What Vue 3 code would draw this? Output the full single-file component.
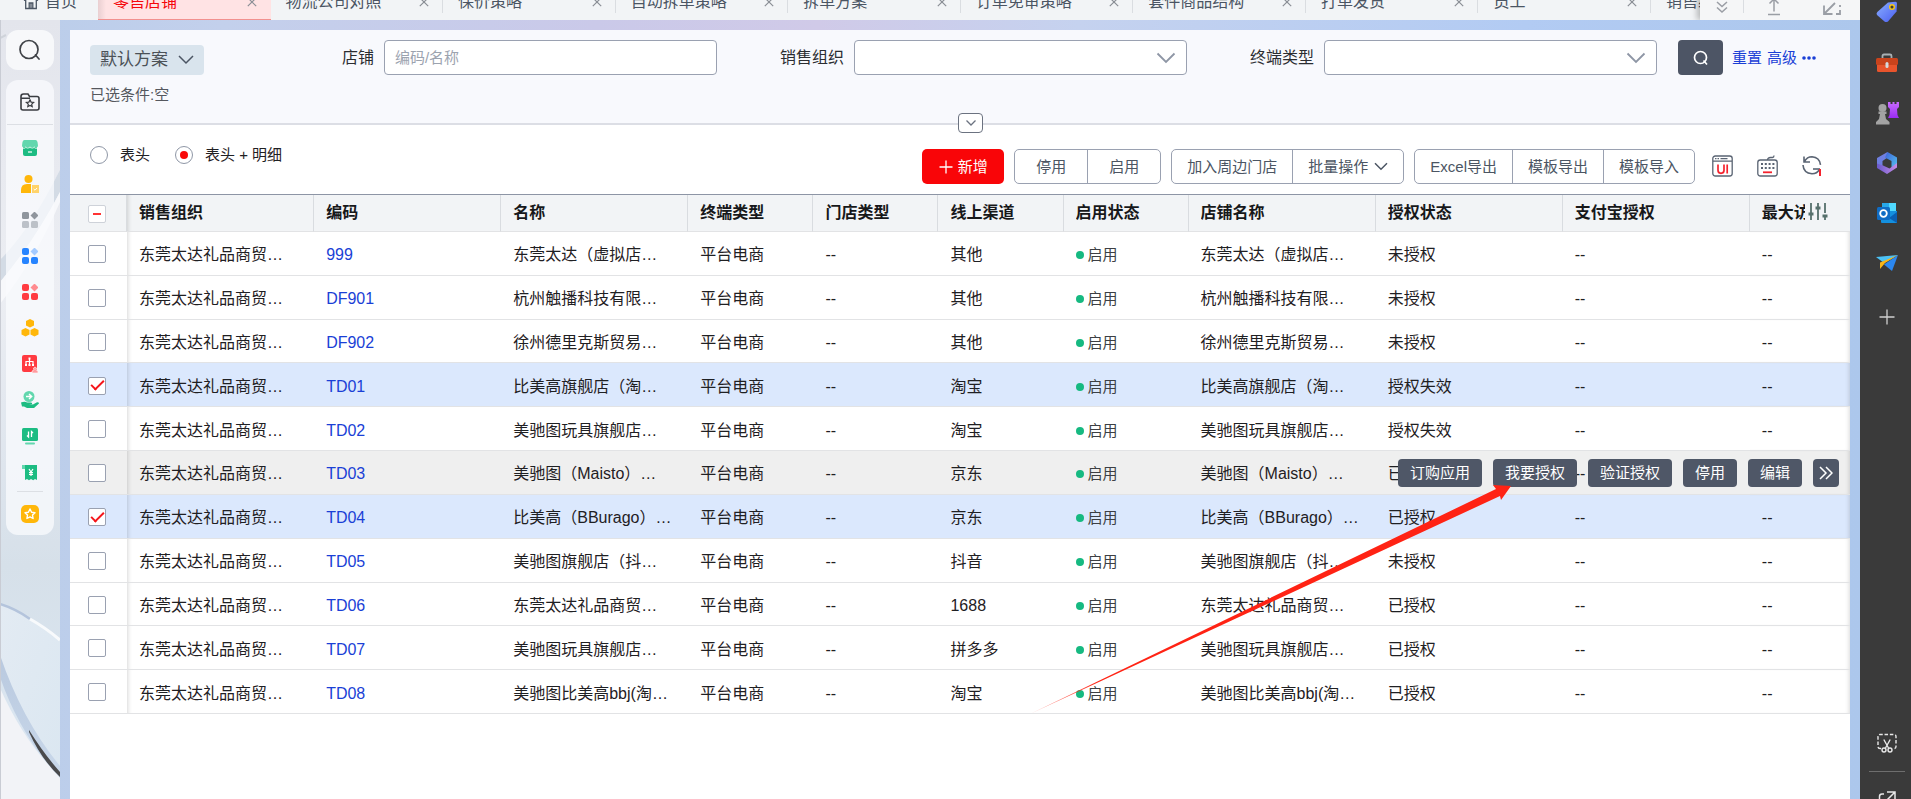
<script setup>
import { ref } from 'vue'

const tabs = ['零售店铺', '物流公司对照', '保价策略', '自动拆单策略', '拆单方案', '订单免审策略', '套件商品结构', '打单发货', '员工']

const columns = [
  { key: 'org', label: '销售组织' },
  { key: 'code', label: '编码' },
  { key: 'name', label: '名称' },
  { key: 'terminal', label: '终端类型' },
  { key: 'storeType', label: '门店类型' },
  { key: 'channel', label: '线上渠道' },
  { key: 'status', label: '启用状态' },
  { key: 'shop', label: '店铺名称' },
  { key: 'auth', label: '授权状态' },
  { key: 'alipay', label: '支付宝授权' },
  { key: 'max', label: '最大访' }
]

const row = (code, name, channel, auth, checked = false) => ({
  org: '东莞太达礼品商贸…',
  code,
  name,
  terminal: '平台电商',
  storeType: '--',
  channel,
  status: '启用',
  shop: name,
  auth,
  alipay: '--',
  max: '--',
  checked
})

const rows = ref([
  row('999', '东莞太达（虚拟店…', '其他', '未授权'),
  row('DF901', '杭州触播科技有限…', '其他', '未授权'),
  row('DF902', '徐州德里克斯贸易…', '其他', '未授权'),
  row('TD01', '比美高旗舰店（淘…', '淘宝', '授权失效', true),
  row('TD02', '美驰图玩具旗舰店…', '淘宝', '授权失效'),
  row('TD03', '美驰图（Maisto）…', '京东', '已授权'),
  row('TD04', '比美高（BBurago）…', '京东', '已授权', true),
  row('TD05', '美驰图旗舰店（抖…', '抖音', '未授权'),
  row('TD06', '东莞太达礼品商贸…', '1688', '已授权'),
  row('TD07', '美驰图玩具旗舰店…', '拼多多', '已授权'),
  row('TD08', '美驰图比美高bbj(淘…', '淘宝', '已授权')
])

const hovered = 'TD03'
const rowActions = ['订购应用', '我要授权', '验证授权', '停用', '编辑']
const view = ref('detail')
</script>

<template>
  <div class="shell">
    <div class="app">
      <header class="topbar">
        <nav class="tabs" aria-label="页签">
          <a class="tab home" href="#home">
            <svg width="16" height="16" viewBox="0 0 16 16" fill="none" stroke="#4b5563" stroke-width="1.3"><path d="M1 6.500 8 1.500l7 5M2.700 5.500v9h10.600v-9M6.200 14.300V9h3.600v5.300M8 9v5" /></svg>
            <span>首页</span>
          </a>
          <a v-for="(t, i) in tabs" :key="t" class="tab" :class="{ active: i === 0 }" href="#tab">
            <span>{{ t }}</span>
            <svg width="10" height="10" viewBox="0 0 10 10" fill="none" stroke="#8b8f96" stroke-width="1.2"><path d="m.8.8 8.400 8.400M9.200.8.8 9.200" /></svg>
          </a>
          <a class="tab cut" href="#tab"><span>销售组织</span></a>
        </nav>
        <div class="tools">
          <button type="button" aria-label="更多页签"><svg width="14" height="18" viewBox="0 0 14 18" fill="none" stroke="#9a9ea5" stroke-width="1.5"><path d="m2 5 5 4.500 5-4.500M2 10.500l5 4.500 5-4.500" /></svg></button>
          <button type="button" aria-label="收起"><svg width="16" height="20" viewBox="0 0 16 20" fill="none" stroke="#9a9ea5" stroke-width="1.5"><path d="M2 18.500h12M8 15.500V3M3.500 7.500 8 3l4.500 4.500" /></svg></button>
          <button type="button" aria-label="全屏"><svg width="20" height="20" viewBox="0 0 20 20" fill="none" stroke="#9a9ea5" stroke-width="1.8"><path d="M2 9.500V18h8.500M2.500 17.500 13 7M14 18h4v-4M18 11V9" /></svg></button>
        </div>
      </header>

      <div class="body">
        <aside class="rail">
          <svg class="rail-bg" viewBox="0 0 60 779" preserveAspectRatio="none" aria-hidden="true">
            <defs>
              <linearGradient id="rb" x1="0" y1="0" x2="0" y2="1">
                <stop offset="0" stop-color="#e3e5ec" /><stop offset=".35" stop-color="#eceef3" /><stop offset=".62" stop-color="#dbe3ec" /><stop offset=".7" stop-color="#d6e0e9" /><stop offset="1" stop-color="#dce8f4" />
              </linearGradient>
              <linearGradient id="rw" x1="0" y1="0" x2="1" y2="1"><stop offset="0" stop-color="#e3ebf3" /><stop offset="1" stop-color="#dbe7f1" /></linearGradient>
              <linearGradient id="rd" x1="0" y1="0" x2="0" y2="1"><stop offset="0" stop-color="#b9c9df" /><stop offset="1" stop-color="#c9d8ea" /></linearGradient>
            </defs>
            <path fill="url(#rb)" d="M0 0h60v779H0z" />
            <path fill="#d3dbe5" d="M0 240Q30 210 60 150v22Q34 222 0 262z" />
            <path fill="#f7f8fb" d="M0 262Q34 222 60 172v10Q36 238 0 284z" />
            <path fill="none" stroke="#cfd3da" stroke-width="2" d="M0 18 6 15" />
            <path fill="url(#rw)" d="M0 584Q30 595 60 620V746Q20 700 0 655z" />
            <path fill="none" stroke="#b4c4dc" stroke-width="2.500" d="M0 584q16 5 30 15" />
            <path fill="none" stroke="#f8fafc" stroke-width="3" d="M30 599q16 9 30 21" />
            <path fill="#f2f3f7" d="M0 668Q24 722 60 757v22H0z" />
            <path fill="url(#rd)" d="M0 635Q22 700 60 746v12Q20 715 0 657z" />
            <path fill="#4a4a4c" d="M29 710q15 24 31 42v5q-19-18-31-45z" />
            <path fill="#c9ccd4" d="M0 0h1v779H0z" />
          </svg>

          <button class="rail-search" type="button" aria-label="搜索">
            <svg width="22" height="22" viewBox="0 0 22 22" fill="none" stroke="#3f4247" stroke-width="1.700" stroke-linecap="round"><circle cx="10" cy="10.500" r="9" /><path d="m16.500 16 3.500 4" /></svg>
          </button>

          <nav class="rail-card" aria-label="应用">
            <button class="fav" type="button" aria-label="收藏夹">
              <svg width="20" height="18" viewBox="0 0 20 18" fill="none" stroke="#3a3d42" stroke-width="1.600"><path d="M1 3.500Q1 1 3.500 1H8l1.500 2.500H17q2 0 2 2V15q0 2-2 2H3q-2 0-2-2zM1 5.200h9" /><path stroke-width="1.200" d="m10 6.800 1.100 2.300 2.500.3-1.900 1.700.5 2.500-2.200-1.200-2.200 1.200.5-2.500-1.900-1.700 2.500-.3z" /></svg>
            </button>
            <div class="apps">
              <button type="button" aria-label="门店"><svg width="18" height="18" viewBox="0 0 18 18"><path fill="#1cbc82" d="M2 8h14v7q0 2-2 2H4q-2 0-2-2z" /><path fill="#62d7ae" d="M3.500 1h11Q16 1 16.500 3l.5 3.500q0 2-1.700 2-1.400 0-2-1-.7 1-2.100 1-1.500 0-2.200-1-.7 1-2.200 1-1.400 0-2.100-1-.6 1-2 1Q1 8.500 1 6.500L1.500 3Q2 1 3.500 1z" /><path fill="none" stroke="#fff" stroke-width=".8" d="M1.500 9q1.700 1 3.300-.5 1.700 1.200 4.200 0 2.500 1.200 4.200 0 1.600 1.500 3.300.5" /><path stroke="#fff" stroke-width="1.200" d="M7 13h4" /></svg></button>
              <button type="button" aria-label="人员"><svg width="18" height="18" viewBox="0 0 18 18"><circle cx="7.500" cy="4" r="4" fill="#ffb70a" /><path fill="#ffb70a" d="M0 18v-3q0-6 6-6h4v9z" /><path fill="#ffd36b" d="M11 10h7v8h-7z" /><path fill="none" stroke="#fff" d="m12.700 14 1.300 1.200 2-2.200" /></svg></button>
              <button type="button" aria-label="应用"><svg width="16" height="16" viewBox="0 0 16 16"><rect width="7" height="7" rx="1.500" fill="#8f959d" /><rect y="9" width="7" height="7" rx="1.500" fill="#bcc1c8" /><rect x="9" y="9" width="7" height="7" rx="1.500" fill="#bcc1c8" /><path fill="#8f959d" d="m12.500-.5 4 4-4 4-4-4z" /></svg></button>
              <button type="button" aria-label="基础"><svg width="16" height="16" viewBox="0 0 16 16"><rect width="7" height="7" rx="2" fill="#2684ff" /><rect y="9" width="7" height="7" rx="2" fill="#2684ff" /><rect x="9" y="9" width="7" height="7" rx="2" fill="#2684ff" /><path fill="#a5cbff" d="m12.500-.5 4 4-4 4-4-4z" /></svg></button>
              <button type="button" aria-label="业务"><svg width="16" height="16" viewBox="0 0 16 16"><rect width="7" height="7" rx="2" fill="#ff3b41" /><rect y="9" width="7" height="7" rx="2" fill="#ff3b41" /><rect x="9" y="9" width="7" height="7" rx="2" fill="#ff3b41" /><path fill="#ff8b8f" d="m12.500-.5 4 4-4 4-4-4z" /></svg></button>
              <button type="button" aria-label="库存"><svg width="18" height="18" viewBox="0 0 18 18" fill="#ffb70a"><path d="m9 0 4 2v4.500l-4 2-4-2V2zM4.500 9l4 2v4.500l-4 2-4-2V11zM13.500 9l4 2v4.500l-4 2-4-2V11z" /></svg></button>
              <button type="button" aria-label="组织"><svg width="16" height="18" viewBox="0 0 16 18"><rect width="15" height="17" rx="2" fill="#ff3b41" /><path fill="none" stroke="#fff" stroke-width="1.200" d="M7.500 4v7M4 10V6.500h7V10" /><path fill="#fff" d="M6.500 2.500h2v2h-2zM3 9h2v2H3zM6.500 9h2v2h-2zM10 9h2v2h-2z" /><path fill="#ff9b9f" stroke="#fff" stroke-width=".6" d="M10 18v-2l2-1-.5-2 1.500-1 1.500 1L14 15l2 1v2z" /></svg></button>
              <button type="button" aria-label="服务"><svg width="18" height="18" viewBox="0 0 18 18"><circle cx="8" cy="5.500" r="5.500" fill="#62d7ae" /><path fill="none" stroke="#fff" stroke-width="1.400" d="M5 5.500h5.500M8 3l2.700 2.500L8 8" /><path fill="#1cbc82" d="M0 11.500q4-1.500 6 0h4q1.500 0 1 1.500H8l4 .5 4-2.300q2-.2 2 1.300L13 17H6l-3-1.500H1z" /></svg></button>
              <button type="button" aria-label="数据"><svg width="18" height="18" viewBox="0 0 18 18"><rect x="1" y="1" width="16" height="13" rx="1.500" fill="#1cbc82" /><rect x="4" y="15.500" width="10" height="2" rx="1" fill="#62d7ae" /><path fill="none" stroke="#fff" stroke-width="1.300" d="M7.500 4.500V10L6 8.500M10.500 10V4.500L12 6" /></svg></button>
              <button type="button" aria-label="财务"><svg width="18" height="18" viewBox="0 0 18 18"><path fill="#1cbc82" d="M1 2h15v15l-2-1-1.800 1.200L10 16l-2 1.200L6 16l-2 1V6H1z" /><path fill="#62d7ae" d="M1 2h3v4H1z" /><path fill="none" stroke="#fff" stroke-width="1.200" d="m8 6 2 3 2-3M10 9v4M8 9.500h4M8 11.300h4" /></svg></button>
            </div>
            <button class="star" type="button" aria-label="常用"><svg width="18" height="18" viewBox="0 0 18 18"><rect width="18" height="18" rx="5" fill="#ffb70a" /><path fill="none" stroke="#fff" stroke-width="1.400" stroke-linejoin="round" d="m9 4 1.600 3.200 3.400.5-2.500 2.400.6 3.400L9 11.900l-3.100 1.600.6-3.400L4 7.700l3.400-.5z" /></svg></button>
          </nav>
        </aside>

        <main class="panel">
          <form class="filters" @submit.prevent>
            <div class="filter-row">
              <div class="plan-area">
                <button class="plan" type="button">
                  <span>默认方案</span>
                  <svg width="16" height="10" viewBox="0 0 16 10" fill="none" stroke="#4b5563" stroke-width="1.500"><path d="m1 1 7 7 7-7" /></svg>
                </button>
              </div>
              <div class="field">
                <label for="f-shop">店铺</label>
                <input id="f-shop" type="text" placeholder="编码/名称" />
              </div>
              <div class="field">
                <label for="f-org">销售组织</label>
                <div class="select">
                  <select id="f-org"><option></option></select>
                  <svg width="20" height="12" viewBox="0 0 20 12" fill="none" stroke="#8e96a5" stroke-width="1.800"><path d="m1.500 1.500 8.500 8.500 8.500-8.500" /></svg>
                </div>
              </div>
              <div class="field">
                <label for="f-type">终端类型</label>
                <div class="select">
                  <select id="f-type"><option></option></select>
                  <svg width="20" height="12" viewBox="0 0 20 12" fill="none" stroke="#8e96a5" stroke-width="1.800"><path d="m1.500 1.500 8.500 8.500 8.500-8.500" /></svg>
                </div>
              </div>
              <div class="filter-actions">
                <button class="go" type="submit" aria-label="查询">
                  <svg width="16" height="16" viewBox="0 0 16 16" fill="none" stroke="#fff" stroke-width="1.700"><circle cx="7.500" cy="7.500" r="6" /><path d="m10.500 10.500 3.500 4" /></svg>
                </button>
                <a href="#reset">重置</a>
                <a href="#advanced">高级</a>
                <a href="#more" aria-label="更多"><svg width="14" height="4" viewBox="0 0 14 4" fill="#1a3fd6"><circle cx="2" cy="2" r="1.800" /><circle cx="7" cy="2" r="1.800" /><circle cx="12" cy="2" r="1.800" /></svg></a>
              </div>
            </div>
            <p class="chosen">已选条件:空</p>
            <button class="fold" type="button" aria-label="展开">
              <svg width="12" height="8" viewBox="0 0 12 8" fill="none" stroke="#6b7280" stroke-width="1.300"><path d="m1.500 1.500 4.500 4.500 4.500-4.500" /></svg>
            </button>
          </form>

          <div class="toolbar">
            <div class="views">
              <label><input v-model="view" type="radio" name="view" value="head" /><span>表头</span></label>
              <label><input v-model="view" type="radio" name="view" value="detail" /><span>表头 + 明细</span></label>
            </div>
            <div class="actions">
              <button class="primary" type="button">
                <svg width="14" height="14" viewBox="0 0 14 14" stroke="#fff" stroke-width="1.300"><path d="M7 .5v13M.5 7h13" /></svg>
                <span>新增</span>
              </button>
              <div class="group toggles"><button type="button">停用</button><button type="button">启用</button></div>
              <div class="group">
                <button type="button">加入周边门店</button>
                <button type="button"><span>批量操作</span><svg width="14" height="9" viewBox="0 0 14 9" fill="none" stroke="#4b5563" stroke-width="1.500"><path d="m1 1.300 6 6 6-6" /></svg></button>
              </div>
              <div class="group"><button type="button">Excel导出</button><button type="button">模板导出</button><button type="button">模板导入</button></div>
            </div>
            <div class="icons">
              <button type="button" aria-label="界面设置"><svg width="21" height="22" viewBox="0 0 21 22" fill="none" stroke="#5a6473" stroke-width="1.300"><rect x=".8" y="1" width="19.400" height="20" rx="2.500" /><path d="M1 6.200h19M3 3.600h1.500M5.500 3.600H7M8.500 3.600h7" /><path stroke="#f5222d" stroke-width="1.700" d="M6 9.500v5.800q0 3 3 3t3-3V9.500M15.200 9.500v9" /></svg></button>
              <button type="button" aria-label="快捷键"><svg width="21" height="22" viewBox="0 0 21 22" fill="none" stroke="#5a6473" stroke-width="1.300"><rect x=".8" y="5" width="19.400" height="16" rx="2.500" /><path d="M10.500 5q0-2.500 3-2.500h2q1.500 0 1.500-2" /><path stroke-width="2" stroke-dasharray="2 1.800" d="M4 9h14M4 13h14" /><path stroke="#f5222d" stroke-width="1.800" d="M6 17.300h9" /></svg></button>
              <button type="button" aria-label="刷新"><svg width="20" height="21" viewBox="0 0 20 21" fill="none" stroke="#5a6473" stroke-width="1.600"><path d="M2 1.500v5.500h6M2.500 6.500Q5 1.800 10 1.800q7.500.5 8.500 8M1 10q.5 8 9 8.800 5 0 7.500-4.500" /><path d="M11 14h7" /><path stroke="#f5222d" stroke-width="2" d="M18 14v7" /></svg></button>
            </div>
          </div>

          <div class="grid">
            <table>
              <colgroup>
                <col class="w-check" /><col class="w-lg" /><col class="w-lg" /><col class="w-lg" /><col class="w-sm" /><col class="w-sm" /><col class="w-sm" /><col class="w-sm" /><col class="w-lg" /><col class="w-lg" /><col class="w-lg" /><col class="w-end" />
              </colgroup>
              <thead>
                <tr>
                  <th class="check"><input class="partial" type="checkbox" aria-label="全选" /></th>
                  <th v-for="c in columns" :key="c.key" :class="'c-' + c.key"><span class="title">{{ c.label }}</span></th>
                </tr>
              </thead>
              <tbody>
                <tr v-for="r in rows" :key="r.code" :class="{ selected: r.checked, hover: r.code === hovered }">
                  <td class="check"><input v-model="r.checked" type="checkbox" :aria-label="'选择 ' + r.code" /></td>
                  <td v-for="c in columns" :key="c.key" :class="'c-' + c.key">
                    <a v-if="c.key === 'code'" href="#detail">{{ r.code }}</a>
                    <span v-else-if="c.key === 'status'" class="status">{{ r.status }}</span>
                    <template v-else>{{ r[c.key] }}</template>
                    <div v-if="c.key === 'max' && r.code === hovered" class="row-actions">
                      <button v-for="a in rowActions" :key="a" type="button">{{ a }}</button>
                      <button class="more" type="button" aria-label="更多操作"><svg width="14" height="14" viewBox="0 0 14 14" fill="none" stroke="#fff" stroke-width="1.500"><path d="m1 1 6 6-6 6M7 1l6 6-6 6" /></svg></button>
                    </div>
                  </td>
                </tr>
              </tbody>
            </table>
            <button class="columns" type="button" aria-label="列设置"><svg width="20" height="18" viewBox="0 0 20 18" fill="none" stroke="#56706c" stroke-width="1.800"><path d="M3 0v17M10 0v17M17 0v10M17 13v4" /><path stroke-width="3" d="M.5 11h5M7.500 5h5M14.500 13h5" /></svg></button>
            <svg class="pointer" width="486" height="232" viewBox="0 0 486 232" aria-hidden="true">
              <defs><linearGradient id="ar" gradientUnits="userSpaceOnUse" x1="0" y1="230" x2="70" y2="197"><stop offset="0" stop-color="#ff2314" stop-opacity=".4" /><stop offset="1" stop-color="#ff2314" /></linearGradient></defs>
              <path fill="url(#ar)" d="M0 230 466 5 463 1 481 2 471 16 470 12z" />
            </svg>
          </div>
        </main>
      </div>
    </div>

    <aside class="dock" aria-label="侧边栏">
      <button type="button" aria-label="购物"><svg width="22" height="22" viewBox="0 0 22 22"><defs><linearGradient id="tg" x1="0" y1="0" x2="1" y2="1"><stop offset="0" stop-color="#8ab0ff" /><stop offset="1" stop-color="#4a5df0" /></linearGradient></defs><path fill="url(#tg)" d="M12 1.500 19.500.8q1.500 0 1.500 1.700l-.5 8L12 20.500q-2 1.200-3.500 0L1 14q-1-1.700.3-3z" /><circle cx="16" cy="6" r="2.300" fill="#3b3b3b" stroke="#f5c518" stroke-width="1.500" /></svg></button>
      <button type="button" aria-label="工具"><svg width="24" height="20" viewBox="0 0 24 20"><path fill="none" stroke="#a9b0b3" stroke-width="1.800" d="M7.500 5V3q0-1.500 1.500-1.500h6q1.500 0 1.500 1.500v2" /><rect x="2" y="9" width="20" height="10" rx="1.500" fill="#e8542c" /><rect x="1" y="5" width="22" height="7" rx="1.500" fill="#c9431c" /><rect x="10.500" y="9" width="3" height="6" rx="1.500" fill="#d5dadd" /></svg></button>
      <button type="button" aria-label="游戏"><svg width="24" height="24" viewBox="0 0 24 24"><defs><linearGradient id="rk" x1="0" y1="0" x2="0" y2="1"><stop offset="0" stop-color="#c86bff" /><stop offset="1" stop-color="#9a2cf2" /></linearGradient></defs><path fill="url(#rk)" d="M13 1h2.500v2h2V1h2v2h2V1H24v5l-2 2 .5 6 1.500 3H13l1.500-3 .5-6-2-2z" /><circle cx="7.500" cy="7" r="4" fill="#a3a3a3" /><path fill="#a3a3a3" d="M3.500 10.500h8V13H10l1 5 3.500 3v2.500H1V21l3-3 1-5H3.500z" /></svg></button>
      <button type="button" aria-label="Microsoft 365"><svg width="22" height="22" viewBox="0 0 22 22"><defs><linearGradient id="m1" x1="0" y1="0" x2="1" y2="1"><stop offset="0" stop-color="#3f62d9" /><stop offset="1" stop-color="#52c4ef" /></linearGradient><linearGradient id="m2" x1="0" y1="0" x2="1" y2="0"><stop offset="0" stop-color="#6a5acd" /><stop offset="1" stop-color="#c58be6" /></linearGradient></defs><path fill="#6f7fe0" d="M11.500 0 1 6v10l5.500-1.500V9L13 4.500z" /><path fill="url(#m1)" d="m11.500 0 9.500 5.500V15l-5.500 1.500V9L9 5.500z" /><path fill="url(#m2)" d="M1 11.500V16l10 6 10-6.500V11l-7.500 5.500L7 13.500z" /></svg></button>
      <button type="button" aria-label="Outlook"><svg width="22" height="22" viewBox="0 0 22 22"><path fill="#28a8ea" d="M6 1h14v8H6z" /><path fill="#50d9ff" d="M13 1h7v8h-7z" /><path fill="#1490df" d="M5 9h16v12H6q-1 0-1-1z" /><path fill="#0a5fb4" d="m21 10-8 6 8 5z" /><rect x="1" y="5" width="13" height="13" rx="1.500" fill="#0f6cc4" /><circle cx="7.500" cy="11.500" r="3.300" fill="none" stroke="#fff" stroke-width="1.800" /></svg></button>
      <button type="button" aria-label="投送"><svg width="22" height="18" viewBox="0 0 22 18"><path fill="#4cc2f5" d="M0 3 22 1 8 9z" /><path fill="#f7b518" d="M22 1 4 8.500V15L9 9z" /><path fill="#2b87f0" d="m22 1-6 16-8-6.500z" /></svg></button>
      <button class="add" type="button" aria-label="添加"><svg width="16" height="16" viewBox="0 0 16 16" stroke="#d0d0d0" stroke-width="1.300"><path d="M8 .5v15M.5 8h15" /></svg></button>
      <button class="clip" type="button" aria-label="截图"><svg width="20" height="20" viewBox="0 0 20 20" fill="none" stroke="#e8e8e8" stroke-width="1.400"><path stroke-dasharray="3.500 1.800" d="M4 15.500H3q-2 0-2-2V3.500Q1 1.500 3 1.500h14q2 0 2 2v10q0 2-2 2h-1" /><path d="m6.800 6.500 4.700 8.500M13.200 6.500 8.500 15" /><circle cx="7" cy="17" r="2" /><circle cx="13" cy="17" r="2" /></svg></button>
      <hr />
      <button class="open" type="button" aria-label="打开链接"><svg width="18" height="18" viewBox="0 0 18 18" fill="none" stroke="#e8e8e8" stroke-width="1.500"><path d="M9 2H17v8M17 2l-8 8M6 4H4Q1.500 4 1.500 6.500V14q0 2.500 2.500 2.500h8q2.500 0 2.500-2.500v-2" /></svg></button>
    </aside>
  </div>
</template>

<style>
body {
  margin: 0;
}
</style>

<style scoped>
.shell {
  display: grid;
  grid-template-columns: minmax(0, 1fr) 51px;
  height: 100vh;
  overflow: hidden;
  font-family: "Liberation Sans", "Noto Sans CJK SC", sans-serif;
  font-size: 16px;
  line-height: 24px;
  color: #1f2023;
}
.shell *,
.shell *::before,
.shell *::after {
  box-sizing: border-box;
}
button {
  display: flex;
  align-items: center;
  justify-content: center;
  margin: 0;
  padding: 0;
  border: 0;
  background: none;
  font: inherit;
  color: inherit;
  white-space: nowrap;
}
a {
  color: #1a3fd6;
  text-decoration: none;
}
svg {
  display: block;
  flex: none;
}
.app {
  display: flex;
  flex-direction: column;
  min-width: 0;
  min-height: 0;
  background: linear-gradient(90deg, #b9cdea 0, #c3d0ec 12%, #cac9e9 32%, #d0cae8 44%, #c5d2ef 58%, #b2cbf3 82%, #acc7ec 100%);
}

/* top tabs */
.topbar {
  display: flex;
  align-items: flex-end;
  height: 20px;
  overflow: hidden;
  background: #f2f4f6;
}
.tabs {
  flex: 1;
  display: grid;
  grid-template-columns: 98px repeat(9, minmax(0, 1fr)) 49px;
  min-width: 0;
  height: 36px;
}
.tab {
  position: relative;
  display: flex;
  align-items: center;
  justify-content: space-between;
  min-width: 0;
  padding: 0 14px 0 15px;
  overflow: hidden;
  color: #4b5563;
  white-space: nowrap;
}
.tab::after {
  content: "";
  position: absolute;
  right: 0;
  top: 12px;
  bottom: 7px;
  width: 1px;
  background: #dadde1;
}
.tab.home {
  justify-content: flex-start;
  gap: 6px;
  padding-left: 23px;
}
.tab.home::after,
.tab.active::after,
.tab.cut::after {
  display: none;
}
.tab.active {
  color: #f5070b;
  background: linear-gradient(90deg, #e9cfd1, #ffe3e4 8px);
  border-bottom: 1px solid #f2918f;
}
.tools {
  position: relative;
  display: flex;
  width: 160px;
  height: 40px;
  background: #f5f6f7;
  box-shadow: -3px 0 6px rgba(0, 0, 0, 0.25);
}
.tools button {
  width: 44px;
  height: 33px;
  padding-top: 18px;
  border-right: 1px solid #dadde1;
}
.tools button:nth-child(2) {
  width: 60px;
  border: 0;
}
.tools button:nth-child(3) {
  width: 56px;
  border: 0;
}

/* left rail */
.body {
  flex: 1;
  display: flex;
  min-height: 0;
}
.rail {
  position: relative;
  flex: none;
  width: 60px;
  padding: 10px 6px;
}
.rail-bg {
  position: absolute;
  inset: 0;
  width: 100%;
  height: 100%;
}
.rail-search {
  position: relative;
  width: 48px;
  height: 40px;
  border-radius: 12px;
  background: #f7f8fa;
}
.rail-card {
  position: relative;
  display: flex;
  flex-direction: column;
  align-items: center;
  margin-top: 10px;
  border-radius: 12px;
  background: rgba(250, 251, 253, 0.75);
}
.fav {
  width: 46px;
  height: 45px;
  border-bottom: 1px solid #dcdfe4;
}
.apps {
  display: flex;
  flex-direction: column;
  align-items: center;
  width: 26px;
  padding: 5px 0 1px;
  border-bottom: 1px solid #dcdfe4;
}
.apps button {
  width: 26px;
  height: 36px;
}
.star {
  width: 46px;
  height: 43px;
}

/* main panel */
.panel {
  flex: 1;
  min-width: 0;
  margin: 10px 10px 0;
  background: #fff;
}
.filters {
  position: relative;
  padding: 10px 0 16px;
  border-bottom: 2px solid #dcdee5;
  background: #f8f9fd;
}
.filter-row {
  display: flex;
  align-items: flex-end;
}
.plan-area {
  width: 177px;
  padding-left: 20px;
}
.plan {
  gap: 10px;
  width: 114px;
  height: 30px;
  border-radius: 4px;
  background: #d9e4ed;
  color: #4b5157;
  font-size: 17px;
}
.field {
  flex: 1;
  display: grid;
  grid-template-columns: 8fr 21fr;
  align-items: center;
  gap: 10px;
  min-width: 0;
}
.field label {
  text-align: right;
  white-space: nowrap;
  color: #2b2d31;
}
.field input,
.select select {
  display: block;
  width: 100%;
  height: 35px;
  padding: 0 10px;
  border: 1px solid #9aa1b1;
  border-radius: 4px;
  background: #fff;
  font: inherit;
  font-size: 15px;
  appearance: none;
}
.field input::placeholder {
  color: #9ca3af;
  opacity: 1;
}
.select {
  position: relative;
}
.select svg {
  position: absolute;
  right: 11px;
  top: 12px;
}
.filter-actions {
  display: flex;
  align-items: center;
  gap: 5px;
  width: 193px;
  padding-left: 21px;
  font-size: 15px;
}
.go {
  width: 45px;
  height: 35px;
  margin-right: 4px;
  border-radius: 4px;
  background: #4d5565;
}
.chosen {
  margin: 8px 0 0;
  padding-left: 20px;
  font-size: 15px;
  color: #55585e;
}
.fold {
  position: absolute;
  left: 50%;
  bottom: -10px;
  width: 25px;
  height: 20px;
  margin-left: -2px;
  border: 1px solid #6b7280;
  border-radius: 4px;
  background: #fff;
}
.toolbar {
  display: flex;
  align-items: flex-start;
  padding: 18px 28px 10px 20px;
  font-size: 15px;
}
.views {
  flex: 1;
  display: flex;
  gap: 25px;
}
.views label {
  display: flex;
  align-items: center;
  gap: 12px;
}
.views input {
  display: grid;
  place-items: center;
  width: 18px;
  height: 18px;
  margin: 0;
  border: 1px solid #8f97a6;
  border-radius: 50%;
  background: #fff;
  appearance: none;
}
.views input:checked::after {
  content: "";
  width: 8px;
  height: 8px;
  border-radius: 50%;
  background: #f90a0a;
}
.actions {
  display: flex;
  gap: 10px;
  margin-top: 6px;
  color: #4b5563;
}
.primary {
  gap: 5px;
  width: 82px;
  height: 35px;
  border-radius: 5px;
  background: #f90508;
  color: #fff;
}
.group {
  display: flex;
  height: 35px;
  border: 1px solid #9aa1b1;
  border-radius: 5px;
}
.group button {
  gap: 6px;
  padding: 0 15px;
}
.group button + button {
  border-left: 1px solid #9aa1b1;
}
.toggles button {
  padding: 0 21px;
}
.icons {
  display: flex;
  align-items: center;
  gap: 24px;
  height: 35px;
  margin: 5px 0 0 17px;
}

/* table */
.grid {
  position: relative;
  border-top: 1px solid #8d95a5;
}
table {
  width: 100%;
  height: 519px;
  border-collapse: separate;
  border-spacing: 0;
  table-layout: fixed;
}
.w-check {
  width: 57px;
}
.w-lg {
  width: 187px;
}
.w-sm {
  width: 125px;
}
.w-end {
  width: 100px;
}
th,
td {
  padding: 4px 0 0 12px;
  overflow: hidden;
  border-bottom: 1px solid #e2e3e5;
  text-align: left;
  white-space: nowrap;
}
th {
  height: 37px;
  padding-top: 0;
  border-right: 1px solid #d9dce0;
  background: #f2f4f6;
  color: #17181a;
}
th:last-child {
  padding-right: 45px;
  border-right: 0;
}
.title {
  display: block;
  overflow: hidden;
}
td:last-child {
  box-shadow: inset -4px 0 4px -3px rgba(0, 0, 0, 0.15);
}
.check {
  padding: 0 3px 0 0;
  text-align: center;
}
.c-org {
  box-shadow: inset 5px 0 4px -4px rgba(0, 0, 0, 0.16);
}
.check input {
  display: inline-grid;
  place-items: center;
  width: 18px;
  height: 18px;
  margin: 0;
  border: 1px solid #9aa1b1;
  border-radius: 2px;
  background: #fff;
  vertical-align: middle;
  appearance: none;
}
.check input:checked::after {
  content: "";
  width: 13px;
  height: 7px;
  margin-bottom: 4px;
  border: solid #f5151a;
  border-width: 0 0 2px 2px;
  transform: rotate(-45deg);
}
.check .partial {
  border-color: #ced2d9;
}
.partial::after {
  content: "";
  width: 8px;
  height: 2px;
  background: #f33;
}
tr.selected td {
  background: #dbe8fd;
}
tr.hover td {
  background: #efefef;
}
tr.hover .c-max {
  overflow: visible;
}
.status {
  display: flex;
  align-items: center;
  gap: 4px;
  font-size: 15px;
  color: #3c3f44;
}
.status::before {
  content: "";
  width: 8px;
  height: 8px;
  border-radius: 50%;
  background: #16b981;
}
.c-max {
  position: relative;
}
.row-actions {
  position: absolute;
  right: 11px;
  top: 8px;
  display: flex;
  gap: 11px;
  font-size: 15px;
  color: #fff;
}
.row-actions button {
  height: 28px;
  padding: 0 12px;
  border-radius: 4px;
  background: #4f5767;
}
.row-actions .more {
  width: 26px;
  padding: 0;
}
.columns {
  position: absolute;
  right: 22px;
  top: 8px;
}
.pointer {
  position: absolute;
  right: 334px;
  top: 289px;
}

/* right dock */
.dock {
  display: flex;
  flex-direction: column;
  align-items: center;
  padding-left: 3px;
  background: #3a3a3a;
}
.dock button {
  flex: none;
  width: 40px;
  height: 50px;
}
.dock button:first-child {
  height: 38px;
  padding-bottom: 14px;
}
.dock .add {
  height: 58px;
}
.dock .clip {
  margin-top: auto;
}
.dock hr {
  flex: none;
  width: 36px;
  height: 1px;
  margin: 3px 0 18px;
  border: 0;
  background: #6e6e6e;
}
.dock .open {
  height: 9px;
  align-items: flex-start;
  overflow: hidden;
}
</style>
